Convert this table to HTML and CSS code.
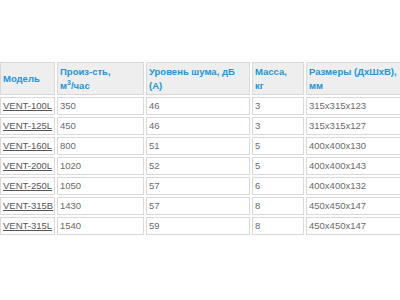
FILE: index.html
```html
<!DOCTYPE html>
<html lang="ru">
<head>
<meta charset="utf-8">
<title>Вентиляторы VENT</title>
<link rel="stylesheet" href="styles.css">
</head>
<body>
<div class="page">
<table class="specs">
<thead>
<tr>
<th class="c1">Модель</th>
<th class="c2">Произ-сть,<br>м<sup>3</sup>/час</th>
<th class="c3">Уровень шума, дБ<br>(А)</th>
<th class="c4">Масса,<br>кг</th>
<th class="c5">Размеры (ДхШхВ),<br>мм</th>
</tr>
</thead>
<tbody>
<tr><td><a href="#">VENT-100L</a></td><td>350</td><td>46</td><td>3</td><td>315x315x123</td></tr>
<tr><td><a href="#">VENT-125L</a></td><td>450</td><td>46</td><td>3</td><td>315x315x127</td></tr>
<tr><td><a href="#">VENT-160L</a></td><td>800</td><td>51</td><td>5</td><td>400x400x130</td></tr>
<tr><td><a href="#">VENT-200L</a></td><td>1020</td><td>52</td><td>5</td><td>400x400x143</td></tr>
<tr><td><a href="#">VENT-250L</a></td><td>1050</td><td>57</td><td>6</td><td>400x400x132</td></tr>
<tr><td><a href="#">VENT-315B</a></td><td>1430</td><td>57</td><td>8</td><td>450x450x147</td></tr>
<tr><td><a href="#">VENT-315L</a></td><td>1540</td><td>59</td><td>8</td><td>450x450x147</td></tr>
</tbody>
</table>
</div>
</body>
</html>
```
FILE: styles.css
```css
html, body {
  margin: 0;
  padding: 0;
  background: #ffffff;
  overflow: hidden;
}
.page {
  width: 400px;
  height: 300px;
  overflow: hidden;
  padding-top: 60px;
  box-sizing: border-box;
}
.specs {
  margin-left: -2px;
  border-collapse: separate;
  border-spacing: 2px;
  table-layout: fixed;
  width: 460px;
  font-family: "Liberation Sans", Arial, sans-serif;
  font-size: 9.5px;
  color: #6a6a6a;
}
.specs th, .specs td {
  box-sizing: border-box;
  border: 1px solid #d9d9d9;
  text-align: left;
  vertical-align: middle;
  padding: 0 2px;
  white-space: nowrap;
}
.specs th {
  background: #eeeeee;
  color: #2493d8;
  font-weight: bold;
  line-height: 14px;
  height: 33px;
}
.specs td {
  background: #ffffff;
  line-height: 12px;
  height: 18px;
}
.specs sup {
  font-size: 7px;
  line-height: 0;
  vertical-align: 4px;
}
.specs a {
  color: #555555;
  text-decoration: underline;
}
.c1 { width: 55px; }
.c2 { width: 87px; }
.c3 { width: 104px; }
.c4 { width: 52px; }
.c5 { width: 150px; }
```
